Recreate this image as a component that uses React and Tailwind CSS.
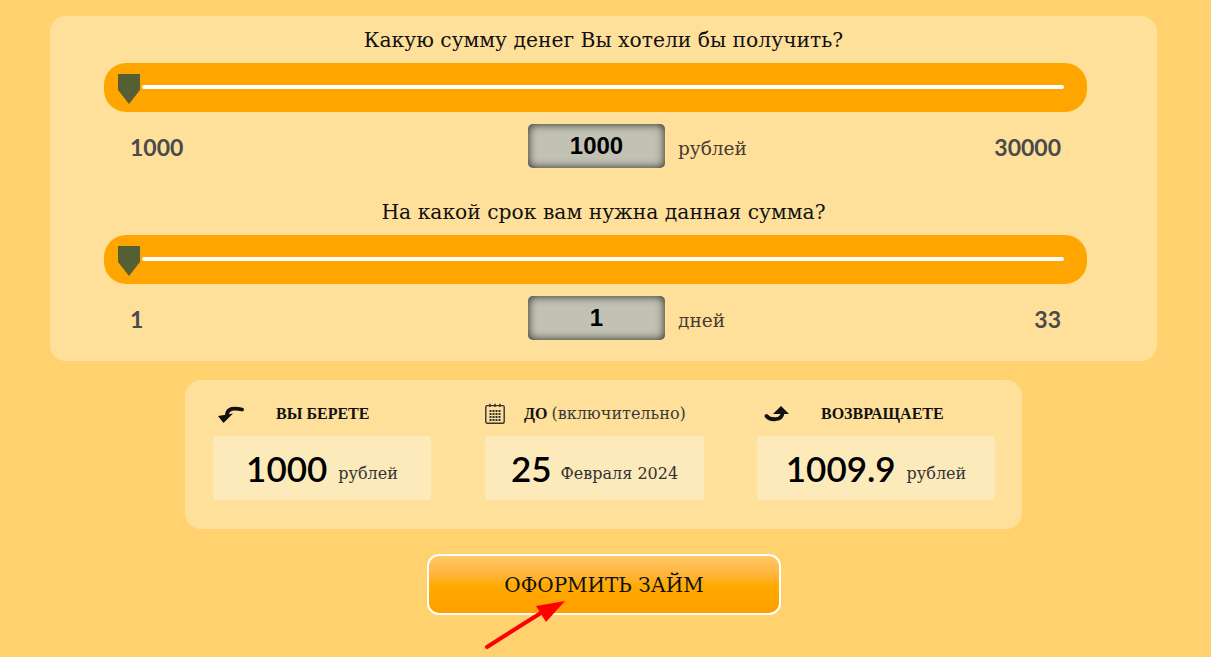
import React from 'react';

const serif = "font-['DejaVu_Serif',serif]";
const lato = "font-['Lato',sans-serif]";

const ArrowBack = () => (
  <svg width="26" height="18" viewBox="0 0 26 18" fill="none">
    <path d="M9 9 C10 3.5 16 2.5 24 4.5" stroke="#111" strokeWidth="3.8" strokeLinecap="round" fill="none" />
    <path d="M0 11 L15 8.5 L5.5 18 Z" fill="#111" />
  </svg>
);

const ArrowForward = () => (
  <svg width="26" height="18" viewBox="0 0 26 18" fill="none">
    <path d="M2.5 11 C6 15.5 18 16 18.5 8" stroke="#111" strokeWidth="3.8" strokeLinecap="round" fill="none" />
    <path d="M17 1 L25 9 L9 9 Z" fill="#111" />
  </svg>
);

const CalendarIcon = () => (
  <svg width="20" height="21" viewBox="0 0 20 21" fill="none">
    <rect x="0.8" y="2.6" width="18.4" height="17.6" rx="1.5" stroke="#333" strokeWidth="1.4" />
    <path d="M5 0.8 V4 M10 0.8 V4 M15 0.8 V4" stroke="#333" strokeWidth="1.5" />
    <path d="M4.5 8 H15.5 M4.5 11 H15.5 M4.5 14 H15.5 M4.5 17 H15.5" stroke="#333" strokeWidth="1.8" strokeDasharray="2 1" />
  </svg>
);

const Slider = () => (
  <div className="relative h-[49px] rounded-[22px] bg-[#ffa500] ml-[54px] mr-[70px]">
    <div className="absolute left-[38px] right-[23px] top-[22px] h-[4px] rounded-full bg-white" />
    <svg className="absolute left-[14px] top-[11px]" width="22" height="30" viewBox="0 0 22 30">
      <path d="M0 0 H22 V16 L11 30 L0 16 Z" fill="#556032" />
    </svg>
  </div>
);

const AmountRow = ({ min, max, value, unit }) => (
  <div className="flex items-center pl-[80px] pr-[96px] h-[44px] mt-[12px]">
    <span className={`w-[398px] mt-[2px] text-[23px] font-bold text-[#4a4a4a] ${lato}`}>{min}</span>
    <input
      readOnly
      value={value}
      className="w-[137px] h-[44px] rounded-[5px] bg-[#c2c2b4] text-center text-[24px] font-bold text-black font-['Liberation_Sans',sans-serif] shadow-[inset_0_0_10px_#222] outline-none"
    />
    <span className={`ml-[13px] mt-[5px] text-[18.5px] text-[#4a3a30] ${serif}`}>{unit}</span>
    <span className={`flex-1 mt-[2px] text-right text-[23px] font-bold text-[#4a4a4a] ${lato}`}>{max}</span>
  </div>
);

const SummaryColumn = ({ width, icon, title, note, iconGap, children }) => (
  <div className={width}>
    <div className="flex items-center h-[56px] pt-[11px]" style={{ gap: iconGap }}>
      {icon}
      <span className="text-[16px] font-bold text-[#111] whitespace-nowrap font-['Liberation_Serif',serif]">
        {title} {note && <span className={`text-[16px] font-normal text-[#3a3a3a] ${serif}`}>{note}</span>}
      </span>
    </div>
    <div className="flex items-center justify-center h-[64px] rounded-[3px] bg-[#fdeabb]">
      {children}
    </div>
  </div>
);

export default function App() {
  return (
    <div className="h-[657px] overflow-hidden bg-[#ffd26f] pt-[16px] px-[50px]">
      <div className="w-[1107px] h-[345px] rounded-[16px] bg-[#ffe09a]">
        <h2 className={`pt-[9px] h-[47px] text-center text-[20.3px] font-normal text-[#111] ${serif}`}>
          Какую сумму денег Вы хотели бы получить?
        </h2>
        <Slider />
        <AmountRow min="1000" max="30000" value="1000" unit="рублей" />
        <h2 className={`mt-[29px] h-[38px] text-center text-[20.3px] font-normal text-[#111] ${serif}`}>
          На какой срок вам нужна данная сумма?
        </h2>
        <Slider />
        <AmountRow min="1" max="33" value="1" unit="дней" />
      </div>

      <div className="flex w-[837px] h-[149px] mt-[19px] ml-[135px] pl-[28px] rounded-[16px] bg-[#ffe09a]">
        <SummaryColumn width="w-[218px]" icon={<span className="ml-[5px]"><ArrowBack /></span>} iconGap="32px" title="ВЫ БЕРЕТЕ">
          <span className={`text-[35px] font-semibold text-black ${lato}`}>1000</span>
          <span className={`ml-[11px] mt-[12px] text-[16px] text-[#333] ${serif}`}>рублей</span>
        </SummaryColumn>
        <SummaryColumn width="w-[219px] ml-[54px]" icon={<CalendarIcon />} iconGap="19px" title="ДО" note="(включительно)">
          <span className={`text-[35px] font-semibold text-black ${lato}`}>25</span>
          <span className={`ml-[9px] mt-[12px] text-[16px] text-[#333] ${serif}`}>Февраля 2024</span>
        </SummaryColumn>
        <SummaryColumn width="w-[238px] ml-[53px]" icon={<span className="ml-[7px]"><ArrowForward /></span>} iconGap="31px" title="ВОЗВРАЩАЕТЕ">
          <span className={`text-[35px] font-semibold text-black ${lato}`}>1009.9</span>
          <span className={`ml-[11px] mt-[12px] text-[16px] text-[#333] ${serif}`}>рублей</span>
        </SummaryColumn>
      </div>

      <div className="relative w-[354px] mt-[25px] ml-[377px]">
        <button className={`w-full h-[61px] rounded-[12px] border-2 border-white bg-gradient-to-b from-[#ffc766] via-[#ffab00] via-50% to-[#ff9e00] text-[20px] text-[#111] ${serif}`}>
          ОФОРМИТЬ ЗАЙМ
        </button>
        <svg className="absolute left-[55px] top-[43px]" width="90" height="56" viewBox="0 0 90 56">
          <path d="M5 50 L62 14" stroke="#ff0000" strokeWidth="4" strokeLinecap="round" />
          <path d="M83 4 L64 25 L54 9 Z" fill="#ff0000" />
        </svg>
      </div>
    </div>
  );
}
